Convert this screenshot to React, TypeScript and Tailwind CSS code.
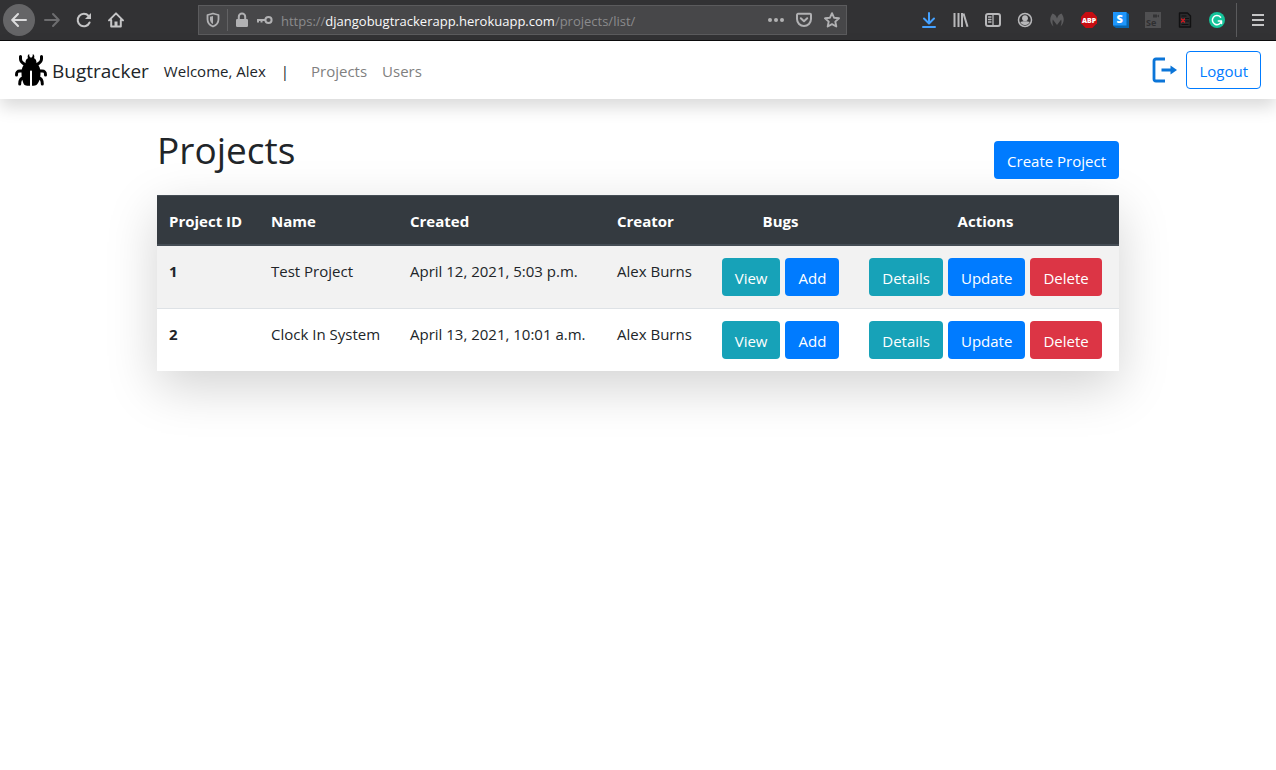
import React from "react";

const SANS = "font-['Open_Sans','Noto_Sans',sans-serif]";

function Icon({ label, children, className = "text-[#b8b8ba]" }: { label: string; children: React.ReactNode; className?: string }) {
  return (
    <button type="button" aria-label={label} className={`flex size-8 shrink-0 items-center justify-center ${className}`}>
      <svg className="overflow-visible" width="16" height="16" viewBox="0 0 16 16" fill="none" stroke="currentColor" strokeWidth="2" strokeLinecap="round" strokeLinejoin="round">
        {children}
      </svg>
    </button>
  );
}

function BrowserBar() {
  return (
    <header className="flex h-[41px] items-center border-b border-[#0c0c0d] bg-[#323234] pr-0.5">
      <nav aria-label="Browser" className="flex shrink-0 items-center pl-[3px]">
        <button type="button" aria-label="Back" className="flex size-8 items-center justify-center rounded-full bg-[#656567] text-[#dcdcdd]">
          <svg width="16" height="16" viewBox="0 0 16 16" fill="none" stroke="currentColor" strokeWidth="2" strokeLinecap="round" strokeLinejoin="round">
            <path d="M15 8H1.5M7 2L1.2 8L7 14" />
          </svg>
        </button>
        <Icon label="Forward" className="ml-px text-[#6d6d6f]">
          <path d="M1 8h13.5M9 2l5.8 6L9 14" />
        </Icon>
        <Icon label="Reload" className="text-[#c5c5c6]">
          <path d="M13.6 10.5A6.2 6.2 0 1 1 12.6 4" />
          <path d="M15 1v6H9z" fill="currentColor" stroke="none" />
        </Icon>
        <Icon label="Home" className="text-[#c5c5c6]">
          <path d="M1 8.4L8 1.4l7 7M3.2 8v6.6h9.6V8" />
          <path d="M6.5 9.5h3V14h-3z" fill="currentColor" stroke="none" />
        </Icon>
      </nav>

      <div className="ml-[66px] flex h-[30px] w-[649px] min-w-0 items-center border border-[#5b5b5d] bg-[#474749] text-[#b1b1b3]">
        <button type="button" aria-label="Tracking protection" className="flex h-full w-7 shrink-0 items-center justify-center">
          <svg width="14" height="16" viewBox="0 0 14 16" fill="none" stroke="currentColor" strokeWidth="1.8">
            <path d="M7 1.5L12.5 3v4.2c0 3.5-2.2 6-5.5 7.3C3.7 13.2 1.5 10.7 1.5 7.2V3z" strokeLinejoin="round" />
            <path d="M7 4L4 4.8v2.4c0 2.2 1 3.7 3 4.8z" fill="currentColor" stroke="none" />
          </svg>
        </button>
        <span className="h-[22px] w-px bg-[#626264]" />
        <svg className="ml-2 shrink-0" width="12" height="16" viewBox="0 0 12 16" fill="currentColor">
          <rect x="0" y="7" width="12" height="8" rx="1.2" />
          <path d="M2.8 8V4.8a3.2 3.2 0 0 1 6.4 0V8" fill="none" stroke="currentColor" strokeWidth="2" />
        </svg>
        <svg className="ml-2 shrink-0" width="17" height="10" viewBox="0 0 17 10" fill="none" stroke="currentColor" strokeWidth="2">
          <circle cx="12.5" cy="5" r="3.1" />
          <path d="M9.5 5H1M2 5v2.500M5.5 5v2.500" />
        </svg>
        <div className="ml-2 min-w-0 flex-1 truncate pt-0.5 text-[13px] text-[#8b8b8d]">
          https://<span className="text-[#f9f9fa]">djangobugtrackerapp.herokuapp.com</span>/projects/list/
        </div>
        <div className="flex shrink-0 items-center gap-3 pr-1.5">
          <svg width="16" height="16" viewBox="0 0 16 16" fill="currentColor">
            <circle cx="2" cy="8" r="2" /><circle cx="8" cy="8" r="2" /><circle cx="14" cy="8" r="2" />
          </svg>
          <svg width="16" height="16" viewBox="0 0 16 16" fill="none" stroke="currentColor" strokeWidth="2" strokeLinecap="round" strokeLinejoin="round">
            <path d="M2 1.8h12a1 1 0 0 1 1 1V7a7 7 0 0 1-14 0V2.8a1 1 0 0 1 1-1z" />
            <path d="M4.8 6.3L8 9.3l3.200-3" />
          </svg>
          <svg width="16" height="16" viewBox="0 0 16 16" fill="none" stroke="currentColor" strokeWidth="1.9" strokeLinejoin="round">
            <path d="M8 1.2l2 4.5 5 .6-3.7 3.3 1 4.9L8 12.1l-4.3 2.4 1-4.9L1 6.3l5-.6z" />
          </svg>
        </div>
      </div>

      <div className="ml-auto flex shrink-0 items-center">
        <Icon label="Downloads" className="text-[#45a1ff]">
          <path d="M8 1v10M3 6.5L8 11.5l5-5M2 15h12" />
        </Icon>
        <Icon label="Library">
          <path d="M1.5 1v14M5.5 1v14M9 1v14M10.5 1.5l4 13.2" strokeLinecap="butt" />
        </Icon>
        <Icon label="Sidebar">
          <rect x="1" y="2" width="14" height="12" rx="2" />
          <path d="M8 2v12M3.5 5h2.500M3.5 7.5h2.500M3.5 10h2.500" strokeWidth="1.3" />
        </Icon>
        <Icon label="Account">
          <circle cx="8" cy="8" r="6.5" strokeWidth="1.5" />
          <circle cx="8" cy="6.2" r="2.9" fill="currentColor" stroke="none" />
          <path d="M3.3 10.1c1.5-1.2 7.9-1.2 9.4 0A5 5 0 0 1 8 13a5 5 0 0 1-4.700-2.900z" fill="currentColor" stroke="none" />
        </Icon>
        <Icon label="Malwarebytes" className="text-[#5c5c5e]">
          <path d="M3.5 1.5C5.8 2.2 7.3 4 8 6.5c.7-2.500 2.200-4.300 4.500-5 2.800 3.500 3.500 9-1 13 1-2.300 1.300-4.600.7-7L8 13 3.800 7.500c-.6 2.400-.3 4.700.7 7-4.500-4-3.800-9.500-1-13z" fill="currentColor" stroke="none" />
        </Icon>
        <Icon label="Adblock Plus">
          <path d="M4.700 0h6.600L16 4.700v6.600L11.300 16H4.700L0 11.300V4.700z" fill="#c70d12" stroke="none" />
          <text x="8" y="10.700" textAnchor="middle" fontSize="7" fontWeight="800" fill="#fff" stroke="none">ABP</text>
        </Icon>
        <Icon label="Stylus">
          <path d="M13 0l3 2v14H3l-3-2z" fill="#0765b0" stroke="none" />
          <path d="M0 0h13.500v13.500H0z" fill="#1e96fc" stroke="none" />
          <text x="6.800" y="10.800" textAnchor="middle" fontSize="11" fontWeight="800" fill="#fff" stroke="none">S</text>
        </Icon>
        <Icon label="Selenium">
          <path d="M0 0h16v16H0z" fill="#505052" stroke="none" />
          <path d="M8 2.500h4v3H8zM12 4l2-1.500v3z" fill="#333335" stroke="none" />
          <text x="1" y="14" fontSize="9" fontWeight="700" fill="#2f2f31" stroke="none">Se</text>
        </Icon>
        <Icon label="Document tool" className="text-[#111112]">
          <path d="M2.500 1h8L13.500 4v11h-11z" strokeWidth="1.400" fill="#2b2b2d" />
          <path d="M5 4h4M8.500 6.500h3M9 9h2.500M5 12.500h6" strokeWidth="1.200" />
          <path d="M4.500 7l3 3M7.500 7l-3 3" stroke="#d71920" strokeWidth="1.300" />
        </Icon>
        <Icon label="Grammarly">
          <circle cx="8" cy="8" r="8" fill="#15c39a" stroke="none" />
          <path d="M11.600 5.200A4.600 4.600 0 1 0 12.500 9H9.300M12.500 9v2.600" stroke="#fff" strokeWidth="1.500" />
        </Icon>
        <span className="ml-[3px] h-[34px] w-px bg-[#5b5b5d]" />
        <Icon label="Menu" className="ml-[5px] text-[#c5c5c6]">
          <path d="M2 3h12M2 8h12M2 13h12" strokeLinecap="butt" />
        </Icon>
      </div>
    </header>
  );
}

function BugLogo() {
  return (
    <svg width="32" height="32" viewBox="0 0 32 32" aria-hidden="true">
      <path d="M10.500 9C10.500 6 11.500 4.800 13 4.200c-.8-1.600-.3-3.400 1.200-4.200 0 1.800.3 2.800 1.100 3.400h1.400c.8-.6 1.100-1.600 1.100-3.400 1.500.8 2 2.600 1.200 4.200 1.500.6 2.500 1.800 2.500 4.800 2.500 2 4 5 4 10 0 6-1.500 9-3.500 11.500-1.500 1.200-2.800 1.300-4 1.300h-5c-1.200 0-2.500-.1-4-1.300C8 28 6.500 25 6.500 19c0-5 1.500-8 4-10z" />
      <path d="M5.500 2.500V5c0 3.500 2.500 4.500 5.500 6M26.500 2.500V5c0 3.500-2.500 4.500-5.500 6M9 17H5c-2.800 0-3.500 1-3.500 4M23 17h4c2.800 0 3.500 1 3.500 4M10 24H8c-2.500.5-3.300 2.500-3.300 6M22 24h2c2.500.5 3.300 2.500 3.300 6" fill="none" stroke="#000" strokeWidth="3" strokeLinecap="round" />
      <path d="M15 32V17.500c0-1.400 2-1.400 2 0V32z" fill="#fff" />
    </svg>
  );
}

function SiteNav() {
  return (
    <nav aria-label="Site" className="relative flex h-[58px] items-center bg-white px-[15px] shadow-[0_8px_16px_rgba(0,0,0,0.15)]">
      <div className="flex items-center pt-0.5">
        <a href="#home" className="flex items-center gap-[5px] text-[19px]">
          <span className="pb-0.5"><BugLogo /></span>
          Bugtracker
        </a>
        <span className="ml-[15px]">Welcome, Alex</span>
        <span className="ml-[15px]">|</span>
        <a href="#projects" className="ml-[22px] text-[#808080]">Projects</a>
        <a href="#users" className="ml-[15px] text-[#808080]">Users</a>
      </div>
      <div className="ml-auto flex items-center gap-2">
        <svg width="26" height="26" viewBox="0 0 26 26" fill="none" stroke="#0b75d8" strokeWidth="2.800" aria-hidden="true">
          <path d="M13 2H4Q2 2 2 4v18q0 2 2 2h9M9.500 13H21" />
          <path d="M18.500 8.500L25 13l-6.500 4.500z" fill="#0b75d8" stroke="none" />
        </svg>
        <button type="button" className="h-[38px] rounded border border-[#007bff] px-3 pt-0.5 text-[#007bff]">Logout</button>
      </div>
    </nav>
  );
}

const tones = {
  info: "bg-[#17a2b8]",
  primary: "bg-[#007bff]",
  danger: "bg-[#dc3545]",
};

function Button({ tone, children }: { tone: keyof typeof tones; children: React.ReactNode }) {
  return (
    <button type="button" className={`h-[38px] rounded px-[13px] pt-0.5 whitespace-nowrap text-white ${tones[tone]}`}>
      {children}
    </button>
  );
}

const TEXT_CELL = "px-3 pt-[13px] pb-[11px]";

const projects = [
  { id: 1, name: "Test Project", created: "April 12, 2021, 5:03 p.m.", creator: "Alex Burns" },
  { id: 2, name: "Clock In System", created: "April 13, 2021, 10:01 a.m.", creator: "Alex Burns" },
];

export default function App() {
  return (
    <div className={`min-h-screen bg-white text-[15px] leading-6 text-[#212529] ${SANS}`}>
      <BrowserBar />
      <SiteNav />
      <main className="mx-auto max-w-[962px] pt-7">
        <div className="mb-4 flex items-end justify-between">
          <h1 className="mb-1.5 text-[37px] leading-[46px]">Projects</h1>
          <Button tone="primary">Create Project</Button>
        </div>
        <table className="w-full table-fixed border-collapse bg-white shadow-[0_16px_48px_rgba(0,0,0,0.175)]">
          <colgroup>
            <col className="w-[102px]" />
            <col className="w-[139px]" />
            <col className="w-[207px]" />
            <col className="w-[104px]" />
            <col className="w-[143px]" />
            <col />
          </colgroup>
          <thead className="bg-[#343a40] text-left text-white">
            <tr className="border-t border-b-2 border-[#454d55]">
              <th className={TEXT_CELL}>Project ID</th>
              <th className={TEXT_CELL}>Name</th>
              <th className={TEXT_CELL}>Created</th>
              <th className={TEXT_CELL}>Creator</th>
              <th className={`text-center ${TEXT_CELL}`}>Bugs</th>
              <th className={`text-center ${TEXT_CELL}`}>Actions</th>
            </tr>
          </thead>
          <tbody>
            {projects.map((p) => (
              <tr key={p.id} className="border-[#dee2e6] align-top odd:bg-[#f2f2f2] even:border-t">
                <th scope="row" className={`text-left ${TEXT_CELL}`}>{p.id}</th>
                <td className={TEXT_CELL}>{p.name}</td>
                <td className={TEXT_CELL}>{p.created}</td>
                <td className={`whitespace-nowrap ${TEXT_CELL}`}>{p.creator}</td>
                <td className="p-3">
                  <div className="flex justify-center gap-[5px]">
                    <Button tone="info">View</Button>
                    <Button tone="primary">Add</Button>
                  </div>
                </td>
                <td className="p-3">
                  <div className="flex justify-center gap-[5px]">
                    <Button tone="info">Details</Button>
                    <Button tone="primary">Update</Button>
                    <Button tone="danger">Delete</Button>
                  </div>
                </td>
              </tr>
            ))}
          </tbody>
        </table>
      </main>
    </div>
  );
}
